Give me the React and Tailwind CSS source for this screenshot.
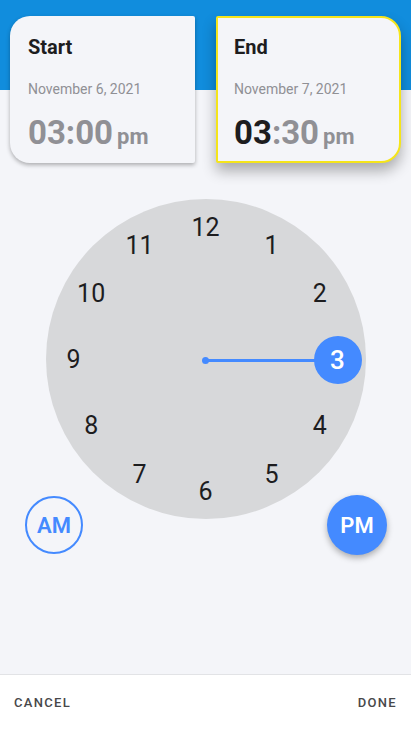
import React from "react";

const NUMS = [12, 1, 2, 3, 4, 5, 6, 7, 8, 9, 10, 11];

function Clock() {
  const R = 132;
  const C = 160;
  return (
    <div className="relative w-[320px] h-[320px] rounded-full bg-[#d7d8da] mx-auto">
      {/* hand */}
      <div className="absolute left-[160px] top-[160px] w-[132px] h-[3px] bg-[#448aff]" />
      <div className="absolute left-[156px] top-[158px] w-[7px] h-[7px] rounded-full bg-[#448aff]" />
      {NUMS.map((n, i) => {
        const a = (i * 30 * Math.PI) / 180;
        const x = C + R * Math.sin(a);
        const y = C + 1 - R * Math.cos(a);
        const sel = n === 3;
        return (
          <div
            key={n}
            className={
              sel
                ? "absolute w-[48px] h-[48px] -ml-[24px] -mt-[24px] rounded-full bg-[#448aff] flex items-center justify-center text-white text-[26px] font-medium"
                : "absolute w-[40px] h-[40px] -ml-[20px] -mt-[20px] flex items-center justify-center text-[#1d1d1f] text-[25px]"
            }
            style={{ left: x, top: y }}
          >
            {n}
          </div>
        );
      })}
    </div>
  );
}

export default function App() {
  return (
    <div className="w-full h-[731px] flex flex-col bg-[#f4f5f9] font-['Roboto',sans-serif]">
      <div className="bg-[linear-gradient(to_bottom,#118ddd_90px,#f4f5f9_90px)] flex gap-[21px] px-[10px] pt-[16px]">
        <div className="w-[185px] h-[147px] bg-[#f4f5f9] rounded-tl-[20px] rounded-bl-[20px] rounded-tr-[2px] rounded-br-[2px] shadow-[0_2px_4px_rgba(0,0,0,0.3)] pl-[18px] pt-[18px]">
          <div className="text-[20px] font-bold text-[#1d1d1f] leading-[26px]">Start</div>
          <div className="text-[14px] text-[#909095] mt-[20px] leading-[18px]">November 6, 2021</div>
          <div className="flex items-baseline mt-[15px] leading-[40px] text-[#909095] font-bold">
            <span className="text-[33px]">03:00</span>
            <span className="text-[22px] ml-[4px]">pm</span>
          </div>
        </div>
        <div className="w-[185px] h-[147px] bg-[#f4f5f9] rounded-tr-[20px] rounded-br-[20px] rounded-tl-[2px] rounded-bl-[2px] border-2 border-[#f5e51b] shadow-[0_8px_14px_rgba(0,0,0,0.3)] pl-[16px] pt-[16px]">
          <div className="text-[20px] font-bold text-[#1d1d1f] leading-[26px]">End</div>
          <div className="text-[14px] text-[#909095] mt-[20px] leading-[18px]">November 7, 2021</div>
          <div className="flex items-baseline mt-[15px] leading-[40px] text-[#909095] font-bold">
            <span className="text-[33px]">
              <span className="text-[#1d1d1f]">03</span>:30
            </span>
            <span className="text-[22px] ml-[4px]">pm</span>
          </div>
        </div>
      </div>

      <div className="mt-[36px]">
        <Clock />
      </div>

      <div className="flex justify-between items-center pl-[25px] pr-[24px] -mt-[24px]">
        <div className="w-[58px] h-[58px] rounded-full border-2 border-[#448aff] flex items-center justify-center text-[#448aff] text-[22px] font-semibold">
          AM
        </div>
        <div className="w-[60px] h-[60px] rounded-full bg-[#448aff] shadow-[0_3px_6px_rgba(0,0,0,0.3)] flex items-center justify-center text-white text-[22px] font-semibold">
          PM
        </div>
      </div>

      <div className="flex-1" />

      <div className="h-[57px] bg-white border-t border-[#e2e3e6] flex items-center justify-between px-[14px]">
        <button className="text-[13px] font-medium tracking-[0.1em] text-[#48484a]">CANCEL</button>
        <button className="text-[13px] font-medium tracking-[0.1em] text-[#48484a]">DONE</button>
      </div>
    </div>
  );
}
